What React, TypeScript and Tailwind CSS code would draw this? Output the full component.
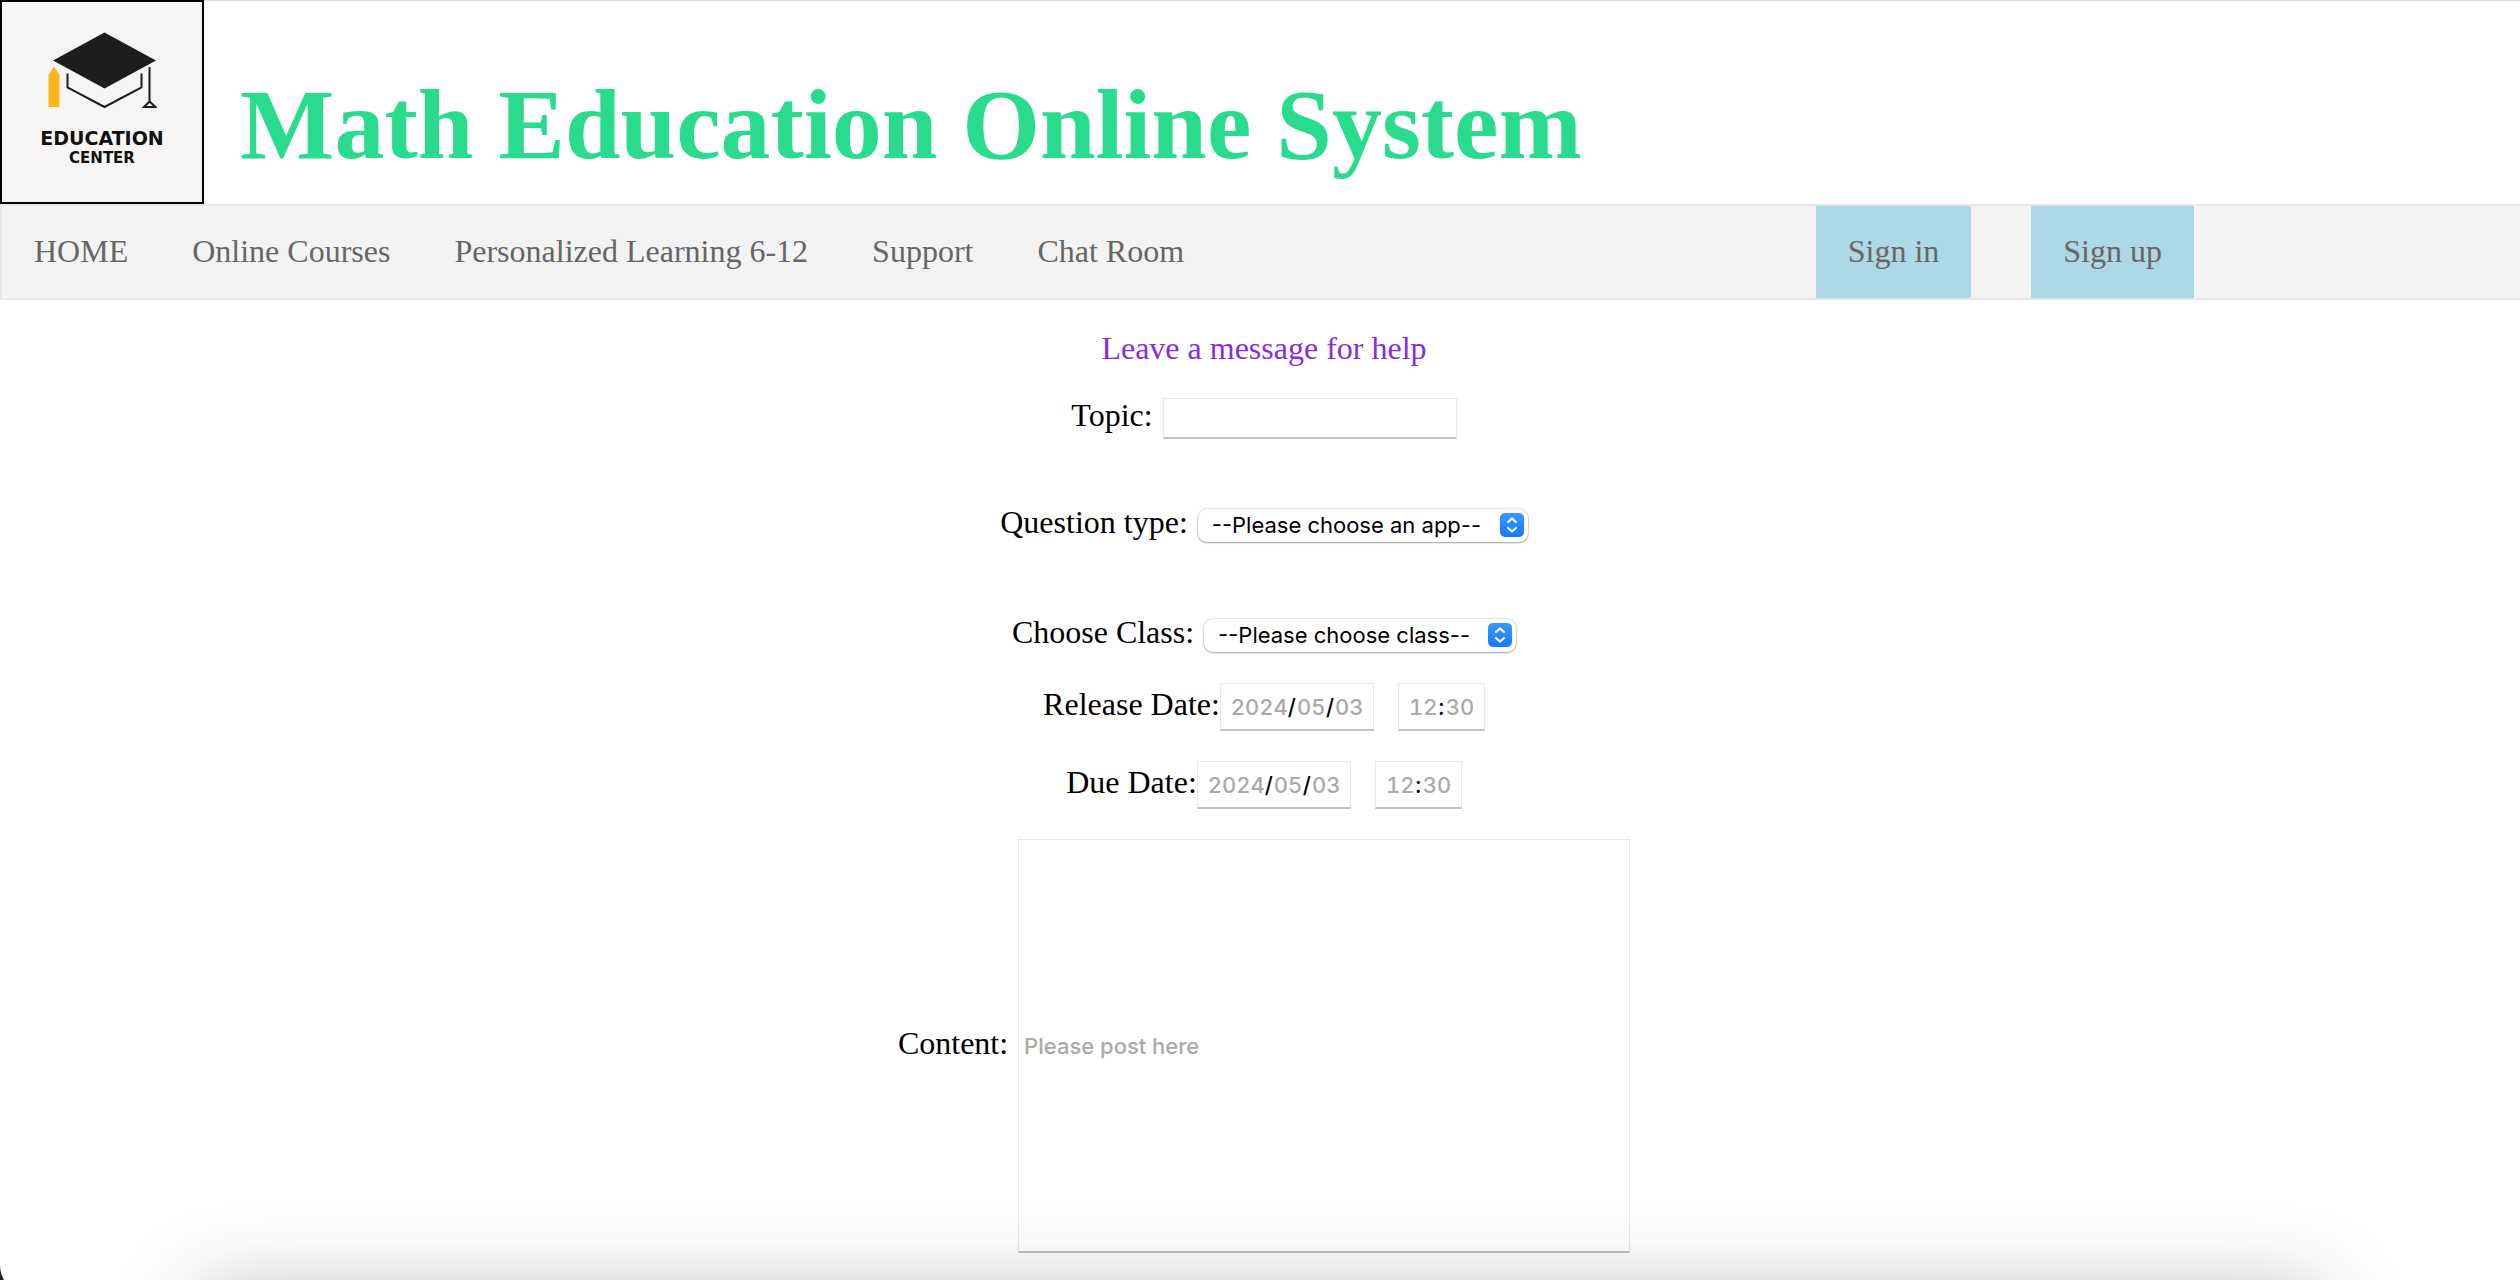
import { ReactNode } from "react";

const navItems = ["HOME", "Online Courses", "Personalized Learning 6-12", "Support", "Chat Room"];

const fieldBox = "border border-b-2 border-[#e9e9e9] border-b-[#c0c0c0] bg-white";

function Logo() {
  return (
    <div className="flex h-[204px] w-[204px] shrink-0 flex-col items-center border-2 border-black bg-[#f6f5f4] pt-7 font-['DejaVu_Sans',sans-serif] text-[#111]">
      <svg viewBox="47 30 110 80" className="h-20 w-[110px]" fill="none" aria-hidden="true">
        <path d="M104.500 32.500 156 60.500 104.500 88.500 53 60.500Z" fill="#1d1d1d" />
        <path d="M48.500 75 54 66.500 59.500 75V107H48.500Z" fill="#fdb31b" />
        <path d="M67.500 73.500V87.500L104.500 107 141.500 87.500V73.500" stroke="#1d1d1d" strokeWidth="2" />
        <path d="M149.500 67V101M149.500 101.500 144 107H155.500Z" stroke="#1d1d1d" strokeWidth="2" />
      </svg>
      <span className="mt-[18px] text-[19px] leading-5 font-bold">EDUCATION</span>
      <span className="text-[15px] leading-5 font-bold">CENTER</span>
    </div>
  );
}

function Row({ children, className }: { children: ReactNode; className: string }) {
  return <div className={`flex items-baseline justify-center ${className}`}>{children}</div>;
}

function Picker({ id, width, placeholder }: { id: string; width: string; placeholder: string }) {
  return (
    <div className={`relative ${width}`}>
      <select
        id={id}
        className="block h-[33px] w-full appearance-none rounded-[9px] bg-white pl-[14px] font-[Inter,sans-serif] text-[22px] leading-[33px] shadow-[0_0_1px_1px_rgba(0,0,0,0.1),0_1px_2px_rgba(0,0,0,0.3)]"
      >
        <option>{placeholder}</option>
      </select>
      <svg viewBox="0 0 24 24" className="pointer-events-none absolute top-1 right-1 h-6 w-6" fill="none" aria-hidden="true">
        <defs>
          <linearGradient id={`${id}-blue`} x1="0" y1="0" x2="0" y2="1">
            <stop stopColor="#3a96fd" />
            <stop offset="1" stopColor="#127bfb" />
          </linearGradient>
        </defs>
        <rect width="24" height="24" rx="5" fill={`url(#${id}-blue)`} />
        <path d="M8 9 12 5.500 16 9M8 15 12 18.500 16 15" stroke="white" strokeWidth="2.200" strokeLinecap="round" strokeLinejoin="round" />
      </svg>
    </div>
  );
}

function Part({ label, value, id, wide }: { label: string; value: string; id?: string; wide?: boolean }) {
  return (
    <input
      id={id}
      aria-label={id ? undefined : label}
      defaultValue={value}
      className={`${wide ? "w-14" : "w-7"} bg-transparent text-center text-[#a9a9a9] tabular-nums`}
    />
  );
}

function Moment({ id, label, className }: { id: string; label: string; className: string }) {
  const box = `${fieldBox} flex h-12 items-center justify-center gap-px font-[Inter,sans-serif] text-[22px] font-medium`;
  return (
    <Row className={className}>
      <label htmlFor={id}>{label}:</label>
      <div className={`${box} w-[154px]`}>
        <Part id={id} label="Year" value="2024" wide />
        <span>/</span>
        <Part label={`${label} month`} value="05" />
        <span>/</span>
        <Part label={`${label} day`} value="03" />
      </div>
      <div className={`${box} ml-6 w-[87px]`}>
        <Part label={`${label} hour`} value="12" />
        <span>:</span>
        <Part label={`${label} minute`} value="30" />
      </div>
    </Row>
  );
}

export default function App() {
  return (
    <div className="relative min-h-screen overflow-hidden bg-white font-['Liberation_Serif',serif] text-[32px] leading-9 text-black">
      <header className="flex items-center border-t border-[#d9d9d9]">
        <div className="-mt-px">
          <Logo />
        </div>
        <h1 className="mt-11 ml-9 text-[100px] leading-[120px] font-bold text-[#29dc8d]">Math Education Online System</h1>
      </header>
      <nav className="flex border-2 border-r-0 border-[#e7e7e7] bg-[#f3f3f3] text-[#666]">
        {navItems.map((item) => (
          <a key={item} href="#" className="px-8 pt-[27px] pb-[29px]">
            {item}
          </a>
        ))}
        <a href="#" className="ml-auto bg-[#add8e6] px-8 pt-[27px] pb-[29px]">
          Sign in
        </a>
        <a href="#" className="mr-[326px] ml-[60px] bg-[#add8e6] px-8 pt-[27px] pb-[29px]">
          Sign up
        </a>
      </nav>
      <form className="pt-[30px] pl-2">
        <h2 className="text-center text-[#8a2be2]">Leave a message for help</h2>
        <Row className="mt-[31px]">
          <label htmlFor="topic">Topic:</label>
          <input id="topic" className={`${fieldBox} ml-2.5 h-[41px] w-[294px] px-1 font-[Inter,sans-serif] text-[22px]`} />
        </Row>
        <Row className="mt-[65px]">
          <label htmlFor="question" className="mr-2.5">Question type:</label>
          <Picker id="question" width="w-[330px]" placeholder="--Please choose an app--" />
        </Row>
        <Row className="mt-[72px]">
          <label htmlFor="class" className="mr-2.5">Choose Class:</label>
          <Picker id="class" width="w-[312px]" placeholder="--Please choose class--" />
        </Row>
        <Moment id="release" label="Release Date" className="mt-[31px]" />
        <Moment id="due" label="Due Date" className="mt-[30px]" />
        <Row className="mt-[30px]">
          <label htmlFor="content">Content:</label>
          <input
            id="content"
            placeholder="Please post here"
            className={`${fieldBox} ml-2.5 h-[414px] w-[612px] px-[5px] font-[Inter,sans-serif] text-[22px] font-medium placeholder:text-[#a9a9a9]`}
          />
        </Row>
      </form>
      <div className="pointer-events-none absolute inset-x-[195px] top-full mt-2 h-40 rounded-3xl shadow-[0_0_80px_rgba(0,0,0,0.25)]" />
      <svg viewBox="0 0 4 16" className="absolute bottom-0 left-0 h-4 w-1" aria-hidden="true">
        <path d="M0 0Q0 10 4 16H0Z" fill="#222" />
      </svg>
    </div>
  );
}
